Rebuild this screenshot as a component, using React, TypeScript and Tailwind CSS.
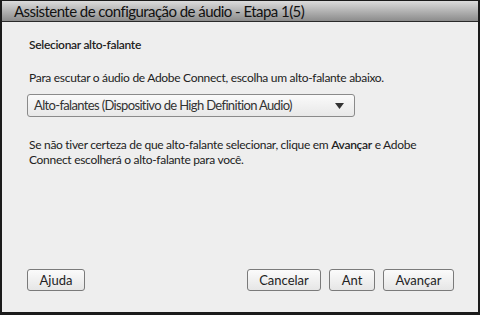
const font = { fontFamily: '"Lato", "Noto Sans", sans-serif' };

function Btn({ children, w }: { children: React.ReactNode; w: string }) {
  return (
    <button
      className={`${w} h-[22px] rounded-[3px] border border-[#7a7a7a] bg-gradient-to-b from-[#fbfbfb] to-[#e6e6e6] text-[13px] text-[#222] leading-none`}
    >
      {children}
    </button>
  );
}

export default function App() {
  return (
    <div
      style={font}
      className="w-[480px] h-[315px] flex flex-col border-l-2 border-r-2 border-t border-b-[3px] border-[#1b1b1b] bg-[#eeeeee]"
    >
      {/* title bar */}
      <div className="h-[21px] shrink-0 flex items-center pl-[12px] bg-gradient-to-b from-[#dcdcdc] to-[#8c8c8c] border-b border-[#2a2a2a]">
        <span className="text-[15px] tracking-[-0.55px] text-[#111] leading-none">
          Assistente de configuração de áudio - Etapa 1(5)
        </span>
      </div>

      {/* body */}
      <div className="flex-1 flex flex-col pl-[27px] pr-[20px] text-[12px] tracking-[-0.3px] text-[#222]">
        <p className="mt-[17px] font-semibold tracking-[-0.3px] leading-none">Selecionar alto-falante</p>
        <p className="mt-[21px] leading-none">
          Para escutar o áudio de Adobe Connect, escolha um alto-falante abaixo.
        </p>
        <div className="mt-[10px] -ml-[2px] w-[328px] h-[23px] flex items-center justify-between pl-[6px] pr-[10px] rounded-[3px] border border-[#8a8a8a] bg-gradient-to-b from-[#fafafa] to-[#e8e8e8] text-[13px] tracking-[-0.65px] text-[#333]">
          <span className="whitespace-nowrap">Alto-falantes (Dispositivo de High Definition Audio)</span>
          <svg width="9" height="6" viewBox="0 0 9 6">
            <path d="M0 0h9L4.5 6z" fill="#333" />
          </svg>
        </div>
        <p className="mt-[20px] leading-[15px]">
          Se não tiver certeza de que alto-falante selecionar, clique em{" "}
          <span className="font-semibold">Avançar</span> e Adobe
          <br />
          Connect escolherá o alto-falante para você.
        </p>

        <div className="mt-auto mb-[21px] -ml-[2px] mr-[4px] flex items-center tracking-normal">
          <Btn w="w-[58px]">Ajuda</Btn>
          <div className="flex-1" />
          <div className="flex gap-[8px]">
            <Btn w="w-[74px]">Cancelar</Btn>
            <Btn w="w-[46px]">Ant</Btn>
            <Btn w="w-[71px]">Avançar</Btn>
          </div>
        </div>
      </div>
    </div>
  );
}
